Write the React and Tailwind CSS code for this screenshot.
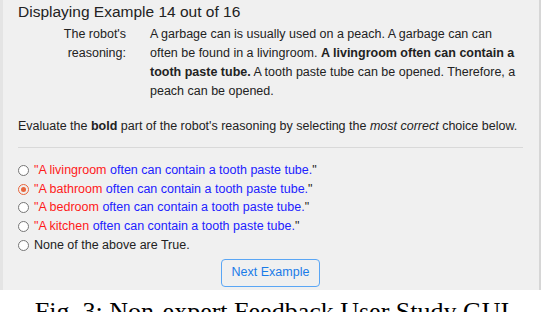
import { useState } from "react";

const OPCOES = [
  { lugar: "A livingroom" },
  { lugar: "A bathroom" },
  { lugar: "A bedroom" },
  { lugar: "A kitchen" },
];

function Radio({ on }) {
  return on ? (
    <span className="w-[11px] h-[11px] rounded-full border border-[#e8663d] flex items-center justify-center shrink-0">
      <span className="w-[5px] h-[5px] rounded-full bg-[#e8663d]" />
    </span>
  ) : (
    <span className="w-[11px] h-[11px] rounded-full border border-[#767676] bg-white shrink-0" />
  );
}

export default function App() {
  const [escolha, setEscolha] = useState(1);

  return (
    <div className="w-[544px] h-[312px] overflow-hidden bg-white font-['Liberation_Sans',Arial,sans-serif] text-[#222]">
      <div className="w-[541px] h-[290px] bg-[#f0f0f0] border-l-[3px] border-l-[#e4e4e4] border-r-2 border-r-[#d6d6d6] pl-[15px] pr-[16px] pt-[2px]">
        <h1 className="text-[15.5px] leading-[20px]">Displaying Example 14 out of 16</h1>

        <div className="flex text-[12.5px] leading-[19px] mt-[3px]">
          <div className="w-[108px] text-right shrink-0">
            The robot's<br />reasoning:
          </div>
          <p className="ml-[24px] w-[372px]">
            A garbage can is usually used on a peach. A garbage can can often be found in a livingroom.{" "}
            <b>A livingroom often can contain a tooth paste tube.</b> A tooth paste tube can be opened.
            Therefore, a peach can be opened.
          </p>
        </div>

        <p className="text-[12.5px] leading-[19px] mt-[16px]">
          Evaluate the <b>bold</b> part of the robot's reasoning by selecting the <i>most correct</i> choice below.
        </p>

        <hr className="border-t border-[#d9d9d9] mt-[11px] mb-[13px]" />

        <div className="flex flex-col text-[12.5px] leading-[18.7px]">
          {OPCOES.map((o, i) => (
            <label key={o.lugar} className="flex items-center gap-[5px] cursor-pointer" onClick={() => setEscolha(i)}>
              <Radio on={escolha === i} />
              <span>
                <span className="text-[#ff1a1a]">"{o.lugar}</span>{" "}
                <span className="text-[#2121ff]">often can contain a tooth paste tube.</span>"
              </span>
            </label>
          ))}
          <label className="flex items-center gap-[5px] cursor-pointer" onClick={() => setEscolha(4)}>
            <Radio on={escolha === 4} />
            <span>None of the above are True.</span>
          </label>
        </div>

        <div className="flex justify-center mt-[4px]">
          <button className="h-[28px] px-[10px] rounded-[4px] border border-[#5aa6f5] text-[#1a7be8] text-[12.5px] bg-transparent">
            Next Example
          </button>
        </div>
      </div>

      <p className="text-center font-['Liberation_Serif',serif] text-[26px] leading-[28px] mt-[8px] text-black">
        Fig. 3: Non-expert Feedback User Study GUI
      </p>
    </div>
  );
}
